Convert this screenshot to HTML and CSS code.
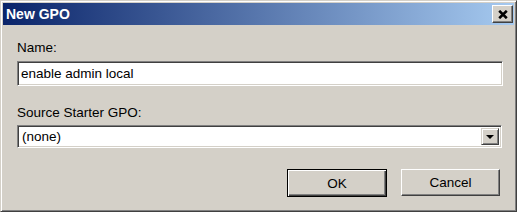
FILE: index.html
```html
<!DOCTYPE html>
<html lang="en">
<head>
    <meta charset="UTF-8">
    <title>New GPO</title>
    <link rel="stylesheet" href="styles.css">
</head>
<body>
    <div class="dialog">
        <div class="title-bar">
            <span class="title-text">New GPO</span>
            <button class="close-button" title="Close">
                <svg width="10" height="9" viewBox="0 0 10 9">
                    <path d="M1.2 0.8 L8.8 8.2 M8.8 0.8 L1.2 8.2" stroke="#000" stroke-width="2.6"/>
                </svg>
            </button>
        </div>

        <div class="dialog-body">
            <label class="field-label" for="gpo-name">Name:</label>
            <input id="gpo-name" class="text-field" type="text" value="enable admin local">

            <label class="field-label second">Source Starter GPO:</label>
            <div class="combo">
                <span class="combo-value">(none)</span>
                <span class="combo-button">
                    <svg width="8" height="4" viewBox="0 0 8 4">
                        <polygon points="0,0 8,0 4,4" fill="#000"/>
                    </svg>
                </span>
            </div>

            <div class="button-row">
                <button class="push-button default">OK</button>
                <button class="push-button">Cancel</button>
            </div>
        </div>
    </div>
</body>
</html>
```

FILE: styles.css
```css
body {
    margin: 0;
    font-family: "Liberation Sans", Arial, sans-serif;
    font-size: 13.5px;
    color: #000;
}
.dialog {
    width: 517px;
    height: 212px;
    box-sizing: border-box;
    background-color: #d4d0c8;
    border: 1px solid;
    border-color: #d4d0c8 #404040 #404040 #d4d0c8;
    box-shadow: inset 1px 1px #fff, inset -1px -1px #808080;
    padding: 2px;
    display: flex;
    flex-direction: column;
}
.title-bar {
    height: 22px;
    background: linear-gradient(to right, #0a246a, #a6caf0);
    display: flex;
    align-items: center;
    justify-content: space-between;
    padding-left: 3px;
    padding-right: 1px;
}
.title-text {
    color: #fff;
    font-weight: bold;
    font-size: 14px;
}
.close-button {
    width: 21px;
    height: 18px;
    box-sizing: border-box;
    padding: 0;
    background-color: #d4d0c8;
    border: 1px solid;
    border-color: #fff #404040 #404040 #fff;
    box-shadow: inset -1px -1px #808080;
    display: flex;
    align-items: center;
    justify-content: center;
}
.dialog-body {
    display: flex;
    flex-direction: column;
    padding: 15px 11px 0 14px;
}
.field-label {
    line-height: 15px;
    margin-bottom: 6px;
}
.field-label.second {
    margin-top: 19px;
    margin-bottom: 5px;
}
.text-field,
.combo {
    box-sizing: border-box;
    border: 1px solid;
    border-color: #808080 #fff #fff #808080;
    box-shadow: inset 1px 1px #404040, inset -1px -1px #d4d0c8;
    background-color: #fff;
    font-family: inherit;
    font-size: 13.5px;
    color: #000;
}
.text-field {
    height: 25px;
    width: 100%;
    margin: 0;
    padding: 0 3px;
    outline: none;
}
.combo {
    height: 23px;
    width: 485px;
    display: flex;
    align-items: stretch;
    padding: 2px;
}
.combo-value {
    flex: 1;
    display: flex;
    align-items: center;
    padding-left: 2px;
}
.combo-button {
    width: 18px;
    box-sizing: border-box;
    background-color: #d4d0c8;
    border: 1px solid;
    border-color: #d4d0c8 #404040 #404040 #d4d0c8;
    box-shadow: inset 1px 1px #fff, inset -1px -1px #808080;
    display: flex;
    align-items: center;
    justify-content: center;
}
.button-row {
    display: flex;
    justify-content: flex-end;
    gap: 14px;
    margin-top: 21px;
    margin-right: 3px;
}
.push-button {
    width: 99px;
    height: 27px;
    box-sizing: border-box;
    padding: 0;
    background-color: #d4d0c8;
    border: 1px solid;
    border-color: #fff #404040 #404040 #fff;
    box-shadow: inset -1px -1px #808080;
    font-family: inherit;
    font-size: 13.5px;
    color: #000;
}
.push-button.default {
    width: 100px;
    height: 28px;
    border: 1px solid #000;
    box-shadow: inset 1px 1px #fff, inset -1px -1px #404040, inset -2px -2px #808080;
}
```
